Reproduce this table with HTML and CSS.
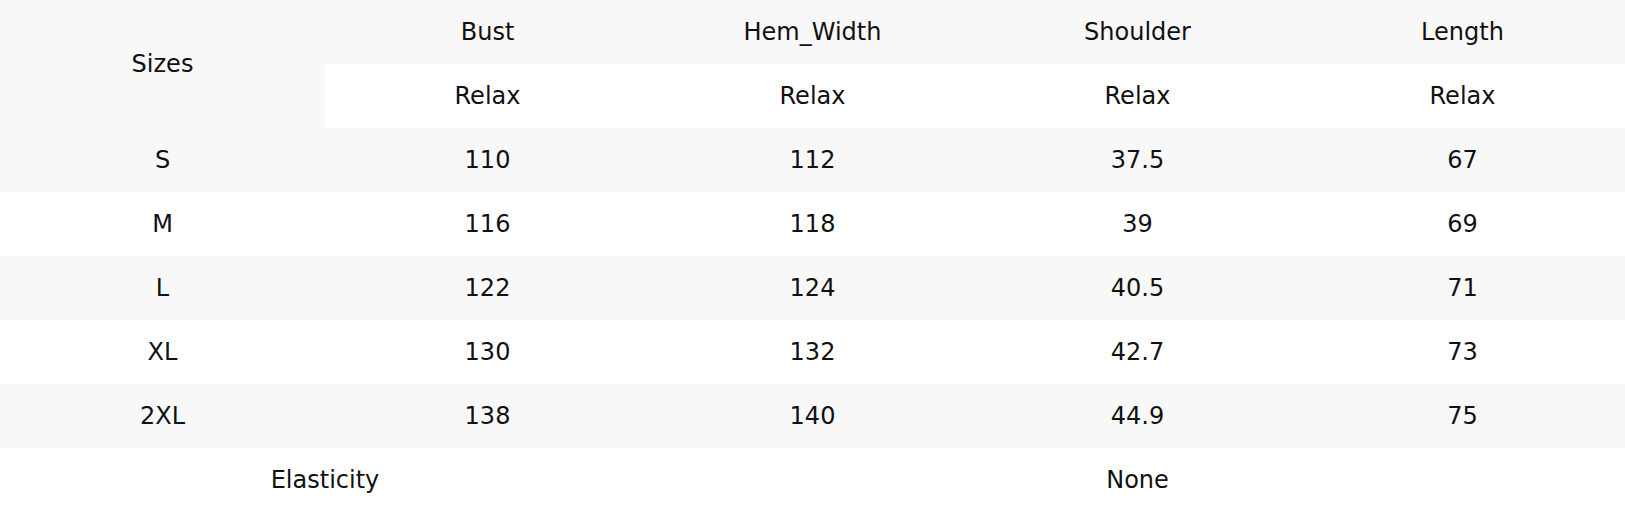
FILE: index.html
```html
<!DOCTYPE html>
<html>
<head>
<meta charset="utf-8">
<link rel="stylesheet" href="styles.css">
</head>
<body>
<table class="size-table">
  <colgroup>
    <col class="col"><col class="col"><col class="col"><col class="col"><col class="col">
  </colgroup>
  <thead>
    <tr class="shade">
      <th rowspan="2">Sizes</th>
      <th>Bust</th>
      <th>Hem_Width</th>
      <th>Shoulder</th>
      <th>Length</th>
    </tr>
    <tr class="plain">
      <th>Relax</th>
      <th>Relax</th>
      <th>Relax</th>
      <th>Relax</th>
    </tr>
  </thead>
  <tbody>
    <tr class="shade"><td>S</td><td>110</td><td>112</td><td>37.5</td><td>67</td></tr>
    <tr class="plain"><td>M</td><td>116</td><td>118</td><td>39</td><td>69</td></tr>
    <tr class="shade"><td>L</td><td>122</td><td>124</td><td>40.5</td><td>71</td></tr>
    <tr class="plain"><td>XL</td><td>130</td><td>132</td><td>42.7</td><td>73</td></tr>
    <tr class="shade"><td>2XL</td><td>138</td><td>140</td><td>44.9</td><td>75</td></tr>
    <tr class="plain"><td colspan="2">Elasticity</td><td colspan="3">None</td></tr>
  </tbody>
</table>
</body>
</html>
```
FILE: styles.css
```css
html, body {
  margin: 0;
  padding: 0;
  background: #ffffff;
}
.size-table {
  width: 1625px;
  border-collapse: collapse;
  table-layout: fixed;
  font-family: "DejaVu Sans", sans-serif;
  font-size: 24px;
  color: #111;
}
.col {
  width: 325px;
}
.size-table th,
.size-table td {
  height: 64px;
  padding: 0;
  text-align: center;
  vertical-align: middle;
  font-weight: normal;
}
.shade th, .shade td {
  background: #f8f8f8;
}
.plain th, .plain td {
  background: #ffffff;
}
.size-table th[rowspan] {
  background: #f8f8f8;
}
```
